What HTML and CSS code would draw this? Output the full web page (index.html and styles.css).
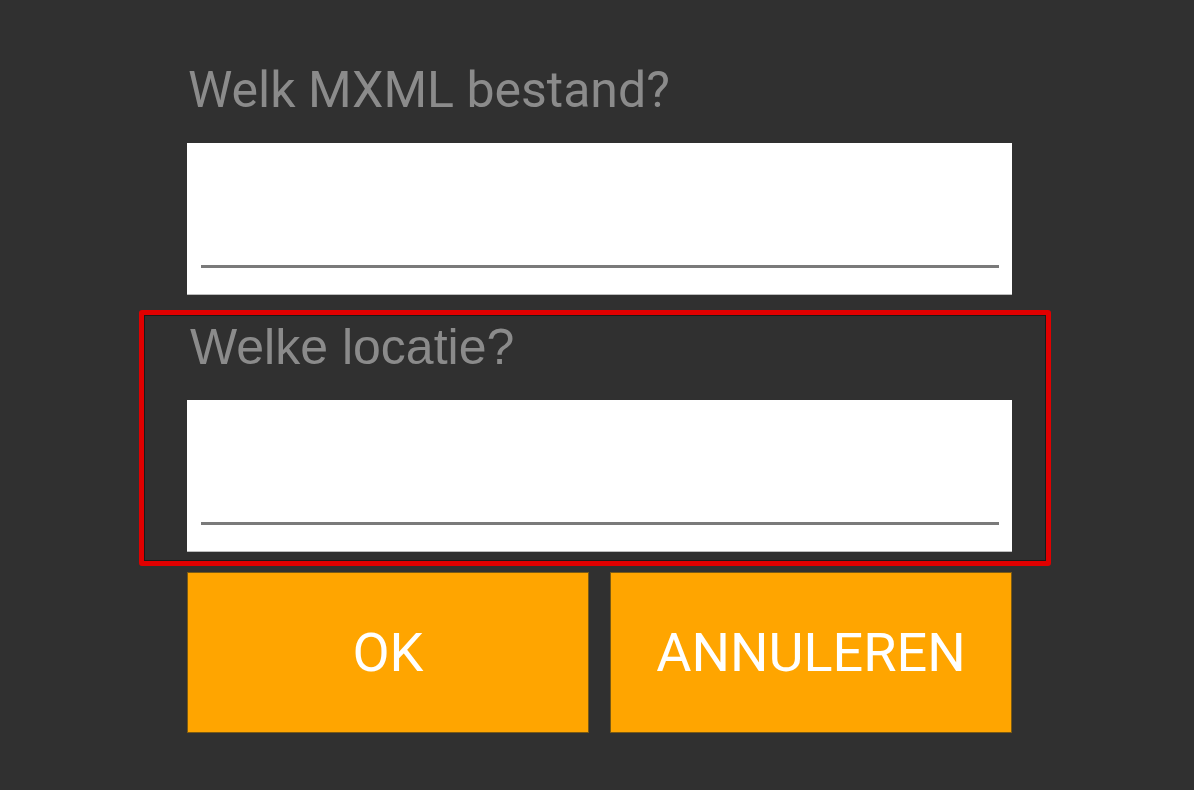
FILE: index.html
```html
<!DOCTYPE html>
<html lang="nl">
<head>
<meta charset="utf-8">
<title>MXML</title>
<link rel="stylesheet" href="styles.css">
</head>
<body>
<main class="form">
  <section class="field">
    <label class="label">Welk MXML bestand?</label>
    <div class="input"><span class="line"></span></div>
  </section>
  <section class="field">
    <label class="label label-alt">Welke locatie?</label>
    <div class="input"><span class="line"></span></div>
  </section>
  <div class="buttons">
    <button class="btn">OK</button>
    <button class="btn">ANNULEREN</button>
  </div>
</main>
<div class="highlight"></div>
</body>
</html>
```
FILE: styles.css
```css
html, body {
  margin: 0;
  padding: 0;
}
body {
  background: #303030;
  width: 1194px;
  height: 790px;
  overflow: hidden;
  position: relative;
  font-family: Roboto, "Liberation Sans", sans-serif;
}
.form {
  width: 825px;
  margin-left: 187px;
  padding-top: 38px;
  display: flex;
  flex-direction: column;
}
.field {
  display: flex;
  flex-direction: column;
}
.label {
  display: block;
  height: 105px;
  line-height: 105px;
  font-size: 50px;
  color: #8b8b8b;
  padding-left: 1px;
}
.label-alt {
  font-family: "Liberation Sans", Arial, sans-serif;
  font-size: 50px;
  padding-left: 3px;
}
.input {
  height: 152px;
  background: #ffffff;
  box-sizing: border-box;
  padding: 122px 13px 0 14px;
  border-bottom: 1px solid #bdbdbd;
}
.line {
  display: block;
  height: 3px;
  background: #7a7a7a;
}
.buttons {
  display: flex;
  gap: 21px;
  margin-top: 20px;
}
.btn {
  flex: 1;
  height: 161px;
  background: #ffa500;
  border: 1px solid #7a5a14;
  color: #ffffff;
  font-family: Roboto, "Liberation Sans", sans-serif;
  font-size: 54px;
  padding: 0;
}
.highlight {
  position: absolute;
  left: 139px;
  top: 310px;
  width: 912px;
  height: 256px;
  box-sizing: border-box;
  border: 5px solid #e00000;
  border-radius: 3px;
  box-shadow: inset 0 0 0 1px #1a1a1a;
}
```
